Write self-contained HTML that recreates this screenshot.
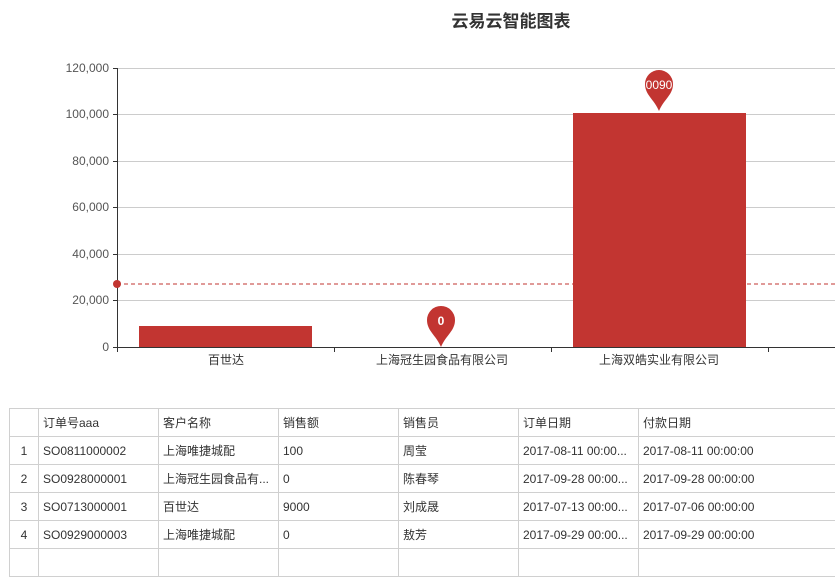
<!DOCTYPE html><html><head><meta charset="utf-8"><style>
body{margin:0;width:835px;height:551px;overflow:hidden;background:#fff;font-family:"Liberation Sans","Noto Sans CJK SC",sans-serif;position:relative}
svg{position:absolute;left:0;top:0}
table{position:absolute;left:9px;top:408px;border-collapse:collapse;table-layout:fixed;width:880px;font-size:12px;color:#333;font-family:"Liberation Sans","Noto Sans CJK SC",sans-serif;}
tr{height:28px}
td{border:1px solid #d0d0d0;padding:0 0 0 4px;white-space:nowrap;overflow:hidden}
td:first-child{text-align:center;padding:0}
</style></head><body>
<svg width="835" height="400" font-family="Liberation Sans, Noto Sans CJK SC, sans-serif">
<text x="511" y="27" font-size="17" font-weight="bold" fill="#333" text-anchor="middle">云易云智能图表</text>
<g stroke="#ccc" stroke-width="1">
<line x1="117" y1="68.5" x2="835" y2="68.5"/><line x1="117" y1="114.5" x2="835" y2="114.5"/>
<line x1="117" y1="161.5" x2="835" y2="161.5"/><line x1="117" y1="207.5" x2="835" y2="207.5"/>
<line x1="117" y1="254.5" x2="835" y2="254.5"/><line x1="117" y1="300.5" x2="835" y2="300.5"/>
</g>
<g font-size="12" fill="#555" text-anchor="end">
<text x="109" y="72">120,000</text><text x="109" y="118">100,000</text><text x="109" y="165">80,000</text>
<text x="109" y="211">60,000</text><text x="109" y="258">40,000</text><text x="109" y="304">20,000</text><text x="109" y="351">0</text>
</g>
<rect x="139" y="326" width="173" height="21" fill="#c23531"/>
<rect x="573" y="113" width="173" height="234" fill="#c23531"/>
<g stroke="#333" stroke-width="1">
<line x1="117.5" y1="68" x2="117.5" y2="347"/>
<line x1="113" y1="68.5" x2="117" y2="68.5"/><line x1="113" y1="114.5" x2="117" y2="114.5"/><line x1="113" y1="161.5" x2="117" y2="161.5"/><line x1="113" y1="207.5" x2="117" y2="207.5"/><line x1="113" y1="254.5" x2="117" y2="254.5"/><line x1="113" y1="300.5" x2="117" y2="300.5"/><line x1="113" y1="347.5" x2="117" y2="347.5"/>
<line x1="117" y1="347.5" x2="835" y2="347.5"/>
<line x1="117.5" y1="347" x2="117.5" y2="352"/><line x1="334.5" y1="347" x2="334.5" y2="352"/><line x1="551.5" y1="347" x2="551.5" y2="352"/><line x1="768.5" y1="347" x2="768.5" y2="352"/>
</g>
<line x1="117" y1="284" x2="835" y2="284" stroke="#c23531" stroke-dasharray="4,3" stroke-width="1"/>
<circle cx="117" cy="284" r="4" fill="#c23531"/>
<g font-size="12" fill="#333" text-anchor="middle">
<text x="226" y="364">百世达</text><text x="442" y="364">上海冠生园食品有限公司</text><text x="659" y="364">上海双皓实业有限公司</text>
</g>
<path d="M441,347 C436,335 427,331 427,320 A14,14 0 1 1 455,320 C455,331 446,335 441,347Z" fill="#c23531"/>
<text x="441" y="325" font-size="12" font-weight="bold" fill="#fff" text-anchor="middle">0</text>
<path d="M659,111 C654,99 645,95 645,84 A14,14 0 1 1 673,84 C673,95 664,99 659,111Z" fill="#c23531"/>
<text x="659" y="89" font-size="12" fill="#fff" text-anchor="middle">0090</text>
</svg>
<table>
<colgroup><col style="width:29px"><col style="width:120px"><col style="width:120px"><col style="width:120px"><col style="width:120px"><col style="width:120px"><col style="width:251px"></colgroup>
<tr><td></td><td>订单号aaa</td><td>客户名称</td><td>销售额</td><td>销售员</td><td>订单日期</td><td>付款日期</td></tr>
<tr><td>1</td><td>SO0811000002</td><td>上海唯捷城配</td><td>100</td><td>周莹</td><td>2017-08-11 00:00...</td><td>2017-08-11 00:00:00</td></tr>
<tr><td>2</td><td>SO0928000001</td><td>上海冠生园食品有...</td><td>0</td><td>陈春琴</td><td>2017-09-28 00:00...</td><td>2017-09-28 00:00:00</td></tr>
<tr><td>3</td><td>SO0713000001</td><td>百世达</td><td>9000</td><td>刘成晟</td><td>2017-07-13 00:00...</td><td>2017-07-06 00:00:00</td></tr>
<tr><td>4</td><td>SO0929000003</td><td>上海唯捷城配</td><td>0</td><td>敖芳</td><td>2017-09-29 00:00...</td><td>2017-09-29 00:00:00</td></tr>
<tr><td></td><td></td><td></td><td></td><td></td><td></td><td></td></tr>
</table>
</body></html>
